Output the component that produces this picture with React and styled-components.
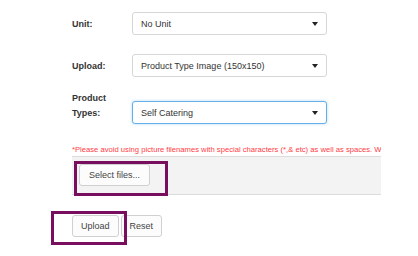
import styled, { createGlobalStyle } from 'styled-components';

const Global = createGlobalStyle`
  body {
    margin: 0;
    background: #fff;
    font-family: 'Liberation Sans', Arial, sans-serif;
    color: #333;
  }
`;

const Page = styled.div`
  position: relative;
  width: 418px;
  height: 256px;
  overflow: hidden;
  padding: 12px 0 0 72px;
  box-sizing: border-box;
`;

const Row = styled.div`
  display: grid;
  grid-template-columns: 60px 195px;
  align-items: end;
  margin-bottom: ${(p) => p.$gap || 0}px;
`;

const Label = styled.label`
  font-size: 9px;
  font-weight: 700;
  line-height: 15px;
  padding-bottom: 3px;
`;

const Select = styled.div`
  height: 23px;
  box-sizing: border-box;
  border: 1px solid ${(p) => (p.$focus ? '#66afe9' : '#d6d6d6')};
  box-shadow: ${(p) => (p.$focus ? '0 0 3px rgba(102,175,233,0.5)' : 'none')};
  border-radius: 3px;
  display: flex;
  align-items: center;
  justify-content: space-between;
  padding: 0 8px 0 8px;
  font-size: 9px;
  background: #fff;

  &::after {
    content: '';
    border-left: 3px solid transparent;
    border-right: 3px solid transparent;
    border-top: 4px solid #222;
  }
`;

const Upload = styled.div`
  width: 309px;
  overflow: hidden;
`;

const Note = styled.p`
  margin: 21px 0 2px;
  font-size: 7.65px;
  color: #ff3b45;
  white-space: nowrap;
`;

const Dropzone = styled.div`
  margin-left: -1px;
  height: 39px;
  box-sizing: border-box;
  background: #f3f3f3;
  border: 1px solid #dcdcdc;
  border-right: none;
  padding: 7px 7px;
`;

const Button = styled.button`
  height: 22px;
  box-sizing: border-box;
  border: 1px solid #d0d0d0;
  border-radius: 3px;
  background: #fcfcfc;
  font-family: 'Liberation Sans', Arial, sans-serif;
  font-size: 9px;
  color: #444;
  padding: 0 ${(p) => p.$pad || 9}px;
  cursor: pointer;
`;

const Actions = styled.div`
  display: flex;
  gap: 2px;
  margin-top: 20px;
`;

const Frame = styled.div`
  position: absolute;
  border: 3px solid #7a0e5e;
  box-sizing: border-box;
`;

const rows = [
  { label: 'Unit:', value: 'No Unit', gap: 19 },
  { label: 'Upload:', value: 'Product Type Image (150x150)', gap: 14 },
  { label: 'Product Types:', value: 'Self Catering', focus: true, gap: 0 },
];

export default function App() {
  return (
    <Page>
      <Global />
      {rows.map((r) => (
        <Row key={r.label} $gap={r.gap}>
          <Label>{r.label}</Label>
          <Select $focus={r.focus}>{r.value}</Select>
        </Row>
      ))}
      <Upload>
        <Note>
          *Please avoid using picture filenames with special characters (*,&amp; etc) as well as spaces. We recommend
        </Note>
        <Dropzone>
          <Button>Select files...</Button>
        </Dropzone>
      </Upload>
      <Actions>
        <Button $pad={8}>Upload</Button>
        <Button $pad={8}>Reset</Button>
      </Actions>
      <Frame style={{ left: 74, top: 161, width: 94, height: 35 }} />
      <Frame style={{ left: 51, top: 211, width: 76, height: 34 }} />
    </Page>
  );
}
